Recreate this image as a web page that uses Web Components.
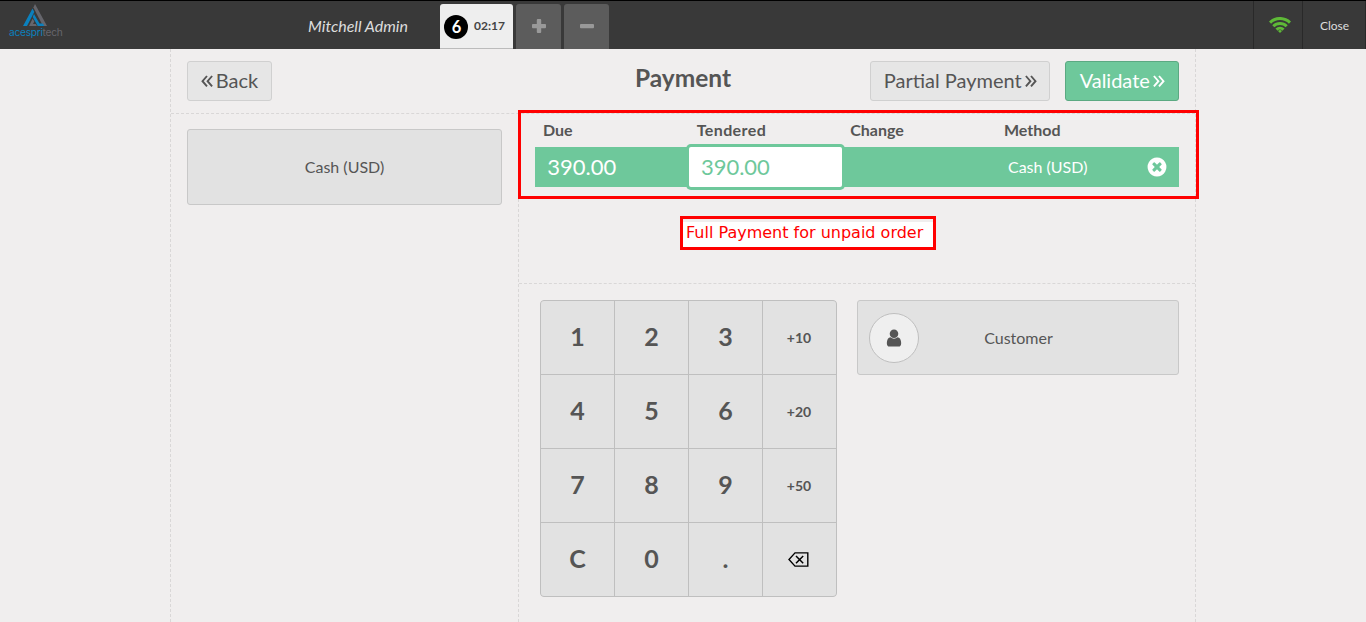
<!DOCTYPE html>
<html lang="en">
<head>
<meta charset="utf-8">
<title>Payment</title>
<style>
html,body{margin:0;height:100%;overflow:hidden}
body{background:#f0eeee;font-family:Lato,"Liberation Sans",sans-serif;color:#555}
</style>
</head>
<body>
<pos-app></pos-app>
<script>
const define = (name, html) => {
  const t = document.createElement('template');
  t.innerHTML = html;
  customElements.define(name, class extends HTMLElement {
    constructor() {
      super();
      this.attachShadow({ mode: 'open' }).appendChild(t.content.cloneNode(true));
    }
  });
};

const ICONS = {
  user: ['0 0 1792 1792', '<path fill="currentColor" d="M1536 1399q0 109-62.5 187t-150.5 78h-854q-88 0-150.5-78t-62.5-187q0-85 8.5-160.5t31.5-152 58.5-131 94-89 134.5-34.5q131 128 313 128t313-128q76 0 134.5 34.5t94 89 58.5 131 31.5 152 8.5 160.5zm-256-887q0 159-112.5 271.5t-271.5 112.5-271.5-112.5-112.5-271.5 112.5-271.5 271.5-112.5 271.5 112.5 112.5 271.5z"/>'],
  remove: ['0 0 1792 1792', '<path fill="currentColor" d="M1277 1122q0-26-19-45l-181-181 181-181q19-19 19-45 0-27-19-46l-90-90q-19-19-46-19-26 0-45 19l-181 181-181-181q-19-19-45-19-27 0-46 19l-90 90q-19 19-19 46 0 26 19 45l181 181-181 181q-19 19-19 45 0 27 19 46l90 90q19 19 46 19 26 0 45-19l181-181 181 181q19 19 45 19 27 0 46-19l90-90q19-19 19-46zm387-226q0 209-103 385.5t-279.5 279.5-385.5 103-385.5-103-279.5-279.5-103-385.5 103-385.5 279.5-279.5 385.5-103 385.5 103 279.5 279.5 103 385.5z"/>'],
  plus: ['0 0 16 16', '<path fill="currentColor" d="M6.700 1h2.600a.9.9 0 0 1 .9.9v4h3.900a.9.9 0 0 1 .9.9v2.500a.9.9 0 0 1-.9.9h-3.900v3.900a.9.9 0 0 1-.9.9H6.700a.9.9 0 0 1-.9-.9v-3.900H1.900a.9.9 0 0 1-.9-.9V6.800a.9.9 0 0 1 .9-.9h3.900v-4a.9.9 0 0 1 .9-.9z"/>'],
  minus: ['0 0 16 16', '<rect x="1" y="5.900" width="14" height="4.300" rx=".9" fill="currentColor"/>'],
  left: ['0 0 12 12', '<path fill="none" stroke="currentColor" stroke-width="1.900" d="M6 1 1.500 6.200 6 11.400M11.100 1 6.600 6.200l4.500 5.200"/>'],
  right: ['0 0 12 12', '<path fill="none" stroke="currentColor" stroke-width="1.900" d="M.9 1 5.400 6.200.9 11.400M6 1 10.500 6.200 6 11.400"/>'],
  wifi: ['0 0 22 16', '<g fill="none" stroke="currentColor" stroke-width="3"><path d="M1 5.600a14.200 14.200 0 0 1 20 0"/><path d="M4.300 9.200a9.500 9.500 0 0 1 13.400 0"/><path d="M7.500 12.600a5 5 0 0 1 7 0"/></g><path fill="currentColor" d="M9 14a2.900 2.900 0 0 1 4 0l-2 2z"/>'],
  backspace: ['0 0 21 15', '<path fill="none" stroke="#000" stroke-width="1.400" d="M7 .9h12.800v13.200H7L1 7.500z"/><path stroke="#000" stroke-width="1.500" d="M8 4l7.200 7.200M15.200 4 8 11.200"/>']
};
customElements.define('pos-icon', class extends HTMLElement {
  constructor() {
    super();
    this.attachShadow({ mode: 'open' });
  }
  connectedCallback() {
    const [box, art] = ICONS[this.getAttribute('name')];
    this.shadowRoot.innerHTML = `<style>:host{display:block;flex:none}svg{display:block;width:100%;height:100%}</style><svg viewBox="${box}">${art}</svg>`;
  }
});

define('pos-logo', `<style>
:host{display:flex;flex-direction:column;width:72px;flex:none;box-sizing:border-box;padding:3px 0 0 9px}
svg{display:block;width:26px;height:22px;margin-left:13px}
p{margin:0;font:10.200px/13px Inter,sans-serif;letter-spacing:-.28px;color:#0b80bd;white-space:nowrap}
span{color:#66666c}
</style>
<svg viewBox="0 0 26 22"><path fill="#66666c" d="M11.400 3.500 13 0 25 22h-4z"/><path fill="#0b80bd" d="M10.500 4.500 12.300 8 5 22H1zM12 10l5.500 9.500H21L22.200 22H15.700L10.700 13z"/><path fill="#66666c" d="M10.700 14.500 12.300 17.500 11 20H13.800L14.900 22H7z"/></svg>
<p>acespri<span>tech</span></p>`);

define('order-tab', `<style>
:host{display:flex;align-items:center;box-sizing:border-box;width:73px;height:45px;background:#eee;border-radius:3px 3px 0 0;border-bottom:1px solid #bbb;padding:2px 0 0 4px;color:#444;font-size:12px;font-weight:700}
.n{width:24px;height:24px;box-sizing:border-box;padding:0 0 0 1px;border-radius:50%;background:#000;color:#fff;font-size:16.500px;line-height:20px;display:flex;align-items:center;justify-content:center;margin-right:6px}
.t{padding-bottom:3px}
</style><div class="n"><slot name="number"></slot></div><div class="t"><slot></slot></div>`);

define('tab-button', `<style>
:host{display:flex;align-items:center;justify-content:center;box-sizing:border-box;padding:0 0 1px 1px;width:45px;height:45px;background:#5c5c5c;color:#999;border-radius:3px 3px 0 0}
</style><slot></slot>`);

define('pos-topbar', `<style>
:host{display:flex;height:49px;box-sizing:border-box;border-top:1px solid #000;background:#393939;color:#ddd}
.user{width:368px;display:flex;align-items:center;justify-content:flex-end;box-sizing:border-box;padding:0 32px 0 0;font-style:italic;font-size:16px}
.tabs{display:flex;gap:3px;padding-top:3px;flex:1}
.tabs pos-icon{width:16px;height:16px}
.cell{box-sizing:border-box;border-left:1px solid #292929;display:flex;align-items:center;justify-content:center;font-size:13px}
.wifi{width:49px;color:#5eb937;padding-left:4px}
.wifi pos-icon{width:22px;height:16px}
.close{width:64px;border-right:1px solid #292929;padding:1px 0 0 1px;font-size:12px}
</style>
<pos-logo></pos-logo><div class="user">Mitchell Admin</div>
<div class="tabs"><order-tab><span slot="number">6</span>02:17</order-tab><tab-button><pos-icon name="plus"></pos-icon></tab-button><tab-button><pos-icon name="minus"></pos-icon></tab-button></div>
<div class="cell wifi"><pos-icon name="wifi"></pos-icon></div><div class="cell close">Close</div>`);

define('pos-button', `<style>
:host{display:flex;align-items:center;justify-content:center;gap:3px;box-sizing:border-box;height:40px;padding-bottom:2px;border:1px solid #d0d0d0;border-radius:3px;background:#e6e6e6;font-size:20px;white-space:nowrap}
:host([primary]){background:#6ec89b;border-color:#5ba982;color:#fff}
::slotted(pos-icon){width:12px;height:12px;margin-top:2px}
</style><slot></slot>`);

define('screen-header', `<style>
:host{display:flex;height:65px;box-sizing:border-box;border-bottom:1px dashed #d9d7d7;padding:12px 16px 0}
.side{flex:1;display:flex}
.end{justify-content:flex-end;gap:15px}
.end pos-button{padding-left:1px;gap:3.500px}
h1{margin:0;font-size:24.500px;line-height:34px;font-weight:700}
</style>
<div class="side"><pos-button style="width:85px"><pos-icon name="left"></pos-icon>Back</pos-button></div>
<h1>Payment</h1>
<div class="side end"><pos-button style="width:180px">Partial Payment<pos-icon name="right"></pos-icon></pos-button><pos-button primary style="width:114px">Validate<pos-icon name="right"></pos-icon></pos-button></div>`);

define('payment-method', `<style>
:host{display:flex;align-items:center;justify-content:center;box-sizing:border-box;height:76px;padding-bottom:2px;border:1px solid #c8c8c8;border-radius:3px;background:#e2e2e2;font-size:16px}
</style><slot></slot>`);

define('payment-lines', `<style>
:host{display:block;height:170px;box-sizing:border-box;padding:0 16px;border-bottom:1px dashed #d9d7d7}
.row{display:grid;grid-template-columns:153.700px 153.500px 153.800px 1fr 44px;align-items:center}
.head{height:33px;box-sizing:border-box;padding-bottom:2px;font-size:16px;font-weight:700}
.head div{padding-left:8px}
.head .wide{letter-spacing:.4px}
.line{height:40px;background:#6ec89b;color:#fff;font-size:22px}
.line div{padding:0 0 2px 12.200px}
.line .edit{align-self:stretch;display:flex;align-items:center;background:#fff;color:#6ec89b;border-radius:2px;box-shadow:0 0 0 3px #6ec89b}
.line .method{font-size:16px;padding-left:12px}
pos-icon{width:22px;height:22px;margin-left:11.300px}
</style>
<div class="row head"><div>Due</div><div class="wide">Tendered</div><div>Change</div><div>Method</div></div>
<div class="row line"><div>390.00</div><div class="edit">390.00</div><div></div><div class="method">Cash (USD)</div><pos-icon name="remove"></pos-icon></div>`);

define('pos-numpad', `<style>
:host{display:grid;grid-template-columns:repeat(4,73px);grid-auto-rows:73px;gap:1px;background:#bfbfbf;border:1px solid #bfbfbf;border-radius:4px;overflow:hidden;flex:none}
b{display:flex;align-items:center;justify-content:center;box-sizing:border-box;padding:0 0 4px 0;background:#e2e2e2;font-size:25px}
.m{font-size:14px;padding:0 1px 0 0}
.i{padding:0 2px 0 0}
pos-icon{width:21px;height:15px}
</style>
<b>1</b><b>2</b><b>3</b><b class="m">+10</b><b>4</b><b>5</b><b>6</b><b class="m">+20</b><b>7</b><b>8</b><b>9</b><b class="m">+50</b><b>C</b><b>0</b><b>.</b><b class="i"><pos-icon name="backspace"></pos-icon></b>`);

define('customer-button', `<style>
:host{display:grid;grid-template-columns:50px 1fr 50px;align-items:center;box-sizing:border-box;width:322px;height:75px;padding:0 11px;border:1px solid #c8c8c8;border-radius:3px;background:#e2e2e2;font-size:16px}
.pic{width:50px;height:50px;box-sizing:border-box;border:1px solid #bfbfbf;border-radius:50%;background:#efefef;display:flex;align-items:center;justify-content:center}
pos-icon{width:20px;height:20px}
.t{text-align:center;padding:0 0 1px 1px}
</style><div class="pic"><pos-icon name="user"></pos-icon></div><div class="t"><slot></slot></div>`);

define('call-out', `<style>
:host{display:block;position:absolute;box-sizing:border-box;border:3px solid #f00;color:#f00;font:16px/19px "DejaVu Sans",sans-serif;white-space:nowrap}
</style><slot></slot>`);

define('payment-screen', `<style>
:host{display:flex;flex-direction:column;box-sizing:border-box;width:1026px;margin:0 auto;flex:1;border:dashed #d9d7d7;border-width:0 1px}
.body{display:grid;grid-template-columns:347px 1fr;flex:1}
.methods{padding:15px 16px}
.main{border-left:1px dashed #d9d7d7}
.pad{display:flex;align-items:flex-start;gap:20px;padding:16px 0 0 21px}
</style>
<screen-header></screen-header>
<div class="body"><div class="methods"><payment-method>Cash (USD)</payment-method></div>
<div class="main"><payment-lines></payment-lines><div class="pad"><pos-numpad></pos-numpad><customer-button>Customer</customer-button></div></div></div>`);

define('pos-app', `<style>
:host{display:flex;flex-direction:column;height:100vh;position:relative;overflow:hidden}
.region{left:518px;top:110px;width:681px;height:89px}
.note{left:680px;top:216px;width:256px;height:34px;padding:4px 0 0 3px;background:linear-gradient(#f0eeee 3px,#fff 3px) padding-box}
</style>
<pos-topbar></pos-topbar><payment-screen></payment-screen>
<call-out class="region"></call-out><call-out class="note">Full Payment for unpaid order</call-out>`);
</script>
</body>
</html>
